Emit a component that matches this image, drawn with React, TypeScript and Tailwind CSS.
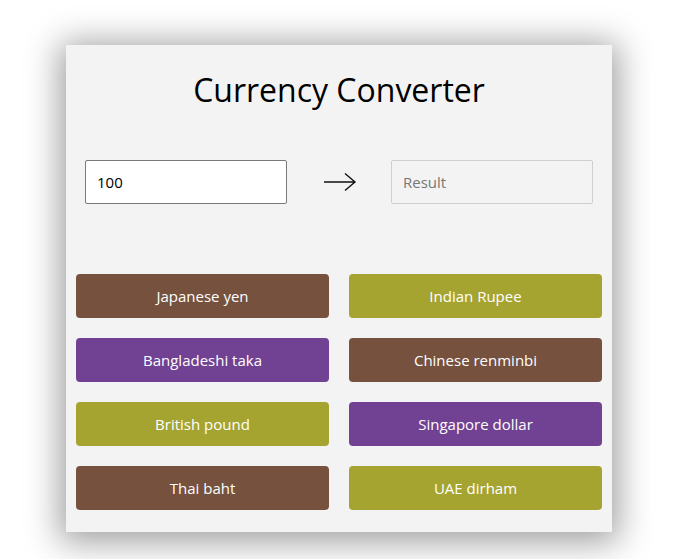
import { useState } from 'react';

//* Button data
const currencies = [
  { label: 'Japanese yen', color: 'bg-[#76513e]' },
  { label: 'Indian Rupee', color: 'bg-[#a6a430]' },
  { label: 'Bangladeshi taka', color: 'bg-[#714293]' },
  { label: 'Chinese renminbi', color: 'bg-[#76513e]' },
  { label: 'British pound', color: 'bg-[#a6a430]' },
  { label: 'Singapore dollar', color: 'bg-[#714293]' },
  { label: 'Thai baht', color: 'bg-[#76513e]' },
  { label: 'UAE dirham', color: 'bg-[#a6a430]' },
];

export default function App() {
  const [amount, setAmount] = useState('100');

  return (
    <div className="w-[690px] h-[559px] bg-white overflow-hidden font-['Open_Sans',sans-serif]">
      <div className="ml-[66px] mt-[45px] w-[546px] h-[487px] bg-[#f3f3f3] shadow-[0_4px_32px_6px_rgba(0,0,0,0.38)] flex flex-col">
        <h1 className="mt-[24px] text-center text-[32px] leading-[42px] text-black">
          Currency Converter
        </h1>

        <div className="mt-[49px] px-[19px] flex items-center justify-between">
          <input
            value={amount}
            onChange={(e) => setAmount(e.target.value)}
            className="w-[202px] h-[44px] bg-white border border-[#7a7a7a] rounded-[2px] px-[11px] text-[15px] text-black outline-none"
          />
          <svg width="34" height="20" viewBox="0 0 34 20" className="mr-[-2px]">
            <path d="M1 10 H32 M22 1.5 L32 10 L22 18.5" fill="none" stroke="#111" strokeWidth="1.4" />
          </svg>
          <input
            placeholder="Result"
            readOnly
            className="w-[202px] h-[44px] bg-[#f3f3f3] border border-[#cfcfcf] rounded-[2px] px-[11px] text-[15px] placeholder-[#777] outline-none"
          />
        </div>

        <div className="mt-[70px] px-[10px] grid grid-cols-2 gap-x-[20px] gap-y-[20px]">
          {currencies.map((c) => (
            <button
              key={c.label}
              type="button"
              className={`${c.color} h-[44px] rounded-[4px] text-white text-[15px]`}
            >
              {c.label}
            </button>
          ))}
        </div>
      </div>
    </div>
  );
}
